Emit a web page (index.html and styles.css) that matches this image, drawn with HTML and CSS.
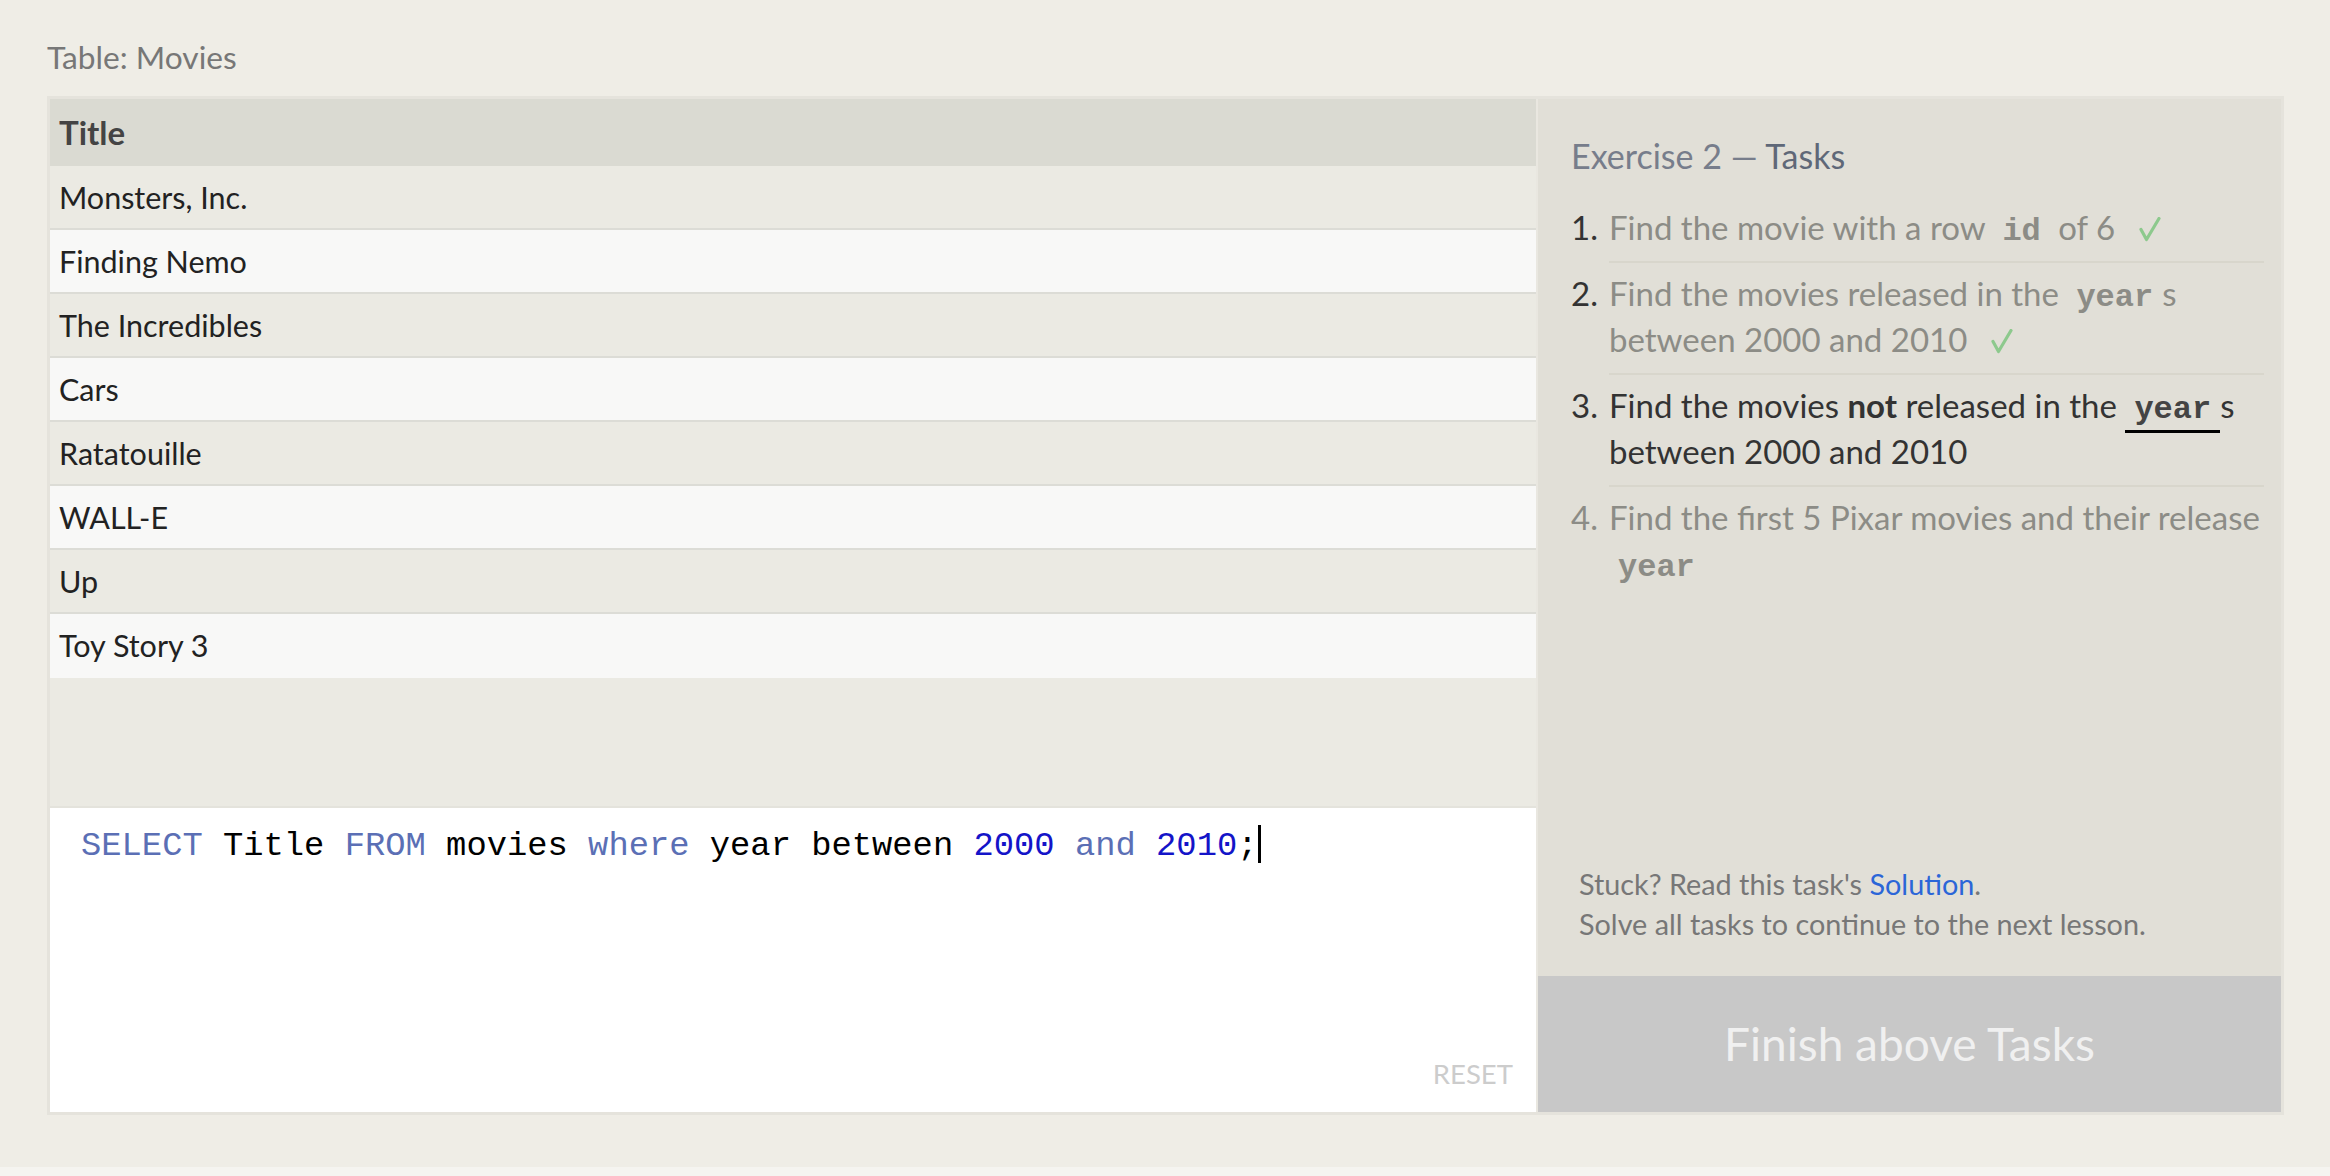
FILE: index.html
```html
<!DOCTYPE html>
<html>
<head>
<meta charset="utf-8">
<link rel="stylesheet" href="styles.css">
</head>
<body>
<div class="page">
  <div class="lesson">
    <div class="table-label">Table: Movies</div>
    <div class="exercise">
      <div class="left">
        <div class="table">
          <div class="th">Title</div>
          <div class="tr odd">Monsters, Inc.</div>
          <div class="tr even">Finding Nemo</div>
          <div class="tr odd">The Incredibles</div>
          <div class="tr even">Cars</div>
          <div class="tr odd">Ratatouille</div>
          <div class="tr even">WALL-E</div>
          <div class="tr odd">Up</div>
          <div class="tr even">Toy Story 3</div>
        </div>
        <div class="editor">
          <div class="code"><span class="kw">SELECT</span> Title <span class="kw">FROM</span> movies <span class="kw">where</span> year between <span class="num">2000</span> <span class="kw">and</span> <span class="num">2010</span>;<span class="cursor"></span></div>
          <div class="reset">RESET</div>
        </div>
      </div>
      <div class="panel">
        <div class="panel-body">
          <h2 class="panel-title">Exercise 2 <span class="dash">—</span> <span class="strong">Tasks</span></h2>
          <ol class="tasks">
            <li class="task done"><span class="n">1.</span><span class="t">Find the movie with a row <code class="c">id</code> of 6<svg class="check" width="22" height="25" viewBox="0 0 22 25"><path d="M2 12.5 L7.5 22.5 L20 1.5" fill="none" stroke="#8dc98d" stroke-width="3.2" stroke-linecap="round" stroke-linejoin="round"/></svg></span></li>
            <li class="task done"><span class="n">2.</span><span class="t">Find the movies released in the <code class="c">year</code>s<br>between 2000 and 2010<svg class="check" width="22" height="25" viewBox="0 0 22 25"><path d="M2 12.5 L7.5 22.5 L20 1.5" fill="none" stroke="#8dc98d" stroke-width="3.2" stroke-linecap="round" stroke-linejoin="round"/></svg></span></li>
            <li class="task current"><span class="n">3.</span><span class="t">Find the movies <b>not</b> released in the <code class="c">year</code>s<br>between 2000 and 2010</span></li>
            <li class="task todo"><span class="n">4.</span><span class="t">Find the first 5 Pixar movies and their release<br><code class="c">year</code></span></li>
          </ol>
          <div class="stuck">
            <div>Stuck? Read this task's <span class="link">Solution</span>.</div>
            <div>Solve all tasks to continue to the next lesson.</div>
          </div>
        </div>
        <div class="finish">Finish above Tasks</div>
      </div>
    </div>
  </div>
  <div class="footer-strip"></div>
</div>
</body>
</html>
```
FILE: styles.css
```css
html, body {
  margin: 0;
  padding: 0;
}
body {
  background: #efede6;
  font-family: Lato, "Open Sans", sans-serif;
  width: 2330px;
  height: 1176px;
  overflow: hidden;
}
.page {
  display: flex;
  flex-direction: column;
  height: 1176px;
}
.lesson {
  height: 1167px;
  padding-left: 47px;
  box-sizing: border-box;
}
.footer-strip {
  height: 9px;
  background: #f5f4f0;
}
.table-label {
  font-size: 31.7px;
  line-height: 36px;
  color: #777;
  padding-top: 39px;
  margin-bottom: 21px;
}
.exercise {
  width: 2237px;
  height: 1019px;
  box-sizing: border-box;
  border: 3px solid #e5e3dc;
  display: flex;
}
.left {
  width: 1486px;
  display: flex;
  flex-direction: column;
}
.table {
  flex: 1;
  background: #ebeae3;
  display: flex;
  flex-direction: column;
}
.th {
  height: 67px;
  line-height: 67px;
  background: #dadad2;
  font-weight: bold;
  font-size: 33px;
  color: #444;
  padding-left: 9px;
}
.tr {
  height: 64px;
  box-sizing: border-box;
  border-bottom: 2px solid #dcdcd6;
  line-height: 62px;
  font-size: 30.5px;
  color: #222;
  padding-left: 9px;
}
.tr.odd { background: #ebeae3; }
.tr.even { background: #f8f8f7; }
.tr:last-child { border-bottom-color: transparent; }
.editor {
  height: 306px;
  box-sizing: border-box;
  border-top: 2px solid #e4e3dc;
  background: #fff;
  display: flex;
  flex-direction: column;
  padding: 17px 23px 20px 31px;
}
.code {
  font-family: "Liberation Mono", "Courier New", monospace;
  font-size: 33.8px;
  line-height: 40px;
  color: #000;
  white-space: pre;
}
.kw { color: #5b6fb5; }
.num { color: #1414c8; }
.cursor {
  display: inline-block;
  width: 3px;
  height: 38px;
  background: #000;
  vertical-align: -8px;
}
.reset {
  margin-top: auto;
  align-self: flex-end;
  font-size: 27.5px;
  line-height: 36px;
  color: #cccccc;
}
.panel {
  width: 745px;
  box-sizing: border-box;
  border-left: 2px solid #e9e7e0;
  background: #e1dfd7;
  display: flex;
  flex-direction: column;
}
.panel-body {
  flex: 1;
  display: flex;
  flex-direction: column;
  padding: 37px 17px 0 33px;
}
.panel-title {
  margin: 0 0 21px 0;
  font-weight: normal;
  font-size: 34px;
  line-height: 40px;
  color: #777d8b;
}
.panel-title .strong { color: #5f6878; }
.tasks {
  list-style: none;
  margin: 0;
  padding: 0;
  flex: 1;
}
.task {
  display: flex;
  font-size: 33px;
  line-height: 46px;
}
.task .n {
  width: 38px;
  flex: none;
  color: #333;
  padding-top: 7px;
}
.task .t {
  flex: 1;
  padding: 7px 0 11px 0;
  border-bottom: 2px solid #d8d6cc;
  color: #8c8c86;
}
.task:last-child .t { border-bottom: none; }
.task.current .t { color: #333; }
.task.todo .n { color: #8c8c86; }
.c {
  font-family: "Liberation Mono", "Courier New", monospace;
  font-weight: bold;
  font-size: 32px;
  line-height: 20px;
  padding: 2px 9px;
}
.task.done .c, .task.todo .c { color: #8c8c86; }
.task.current .c {
  color: #444;
  border-bottom: 3px solid #000;
}
.check {
  margin-left: 24px;
  vertical-align: -2px;
}
.stuck {
  padding-left: 8px;
  font-size: 28.8px;
  line-height: 40px;
  color: #777;
  margin-bottom: 32px;
}
.link { color: #2b66d8; }
.finish {
  height: 136px;
  background: #c8c8c8;
  color: #f0f0f0;
  font-size: 46px;
  line-height: 136px;
  text-align: center;
}
```
